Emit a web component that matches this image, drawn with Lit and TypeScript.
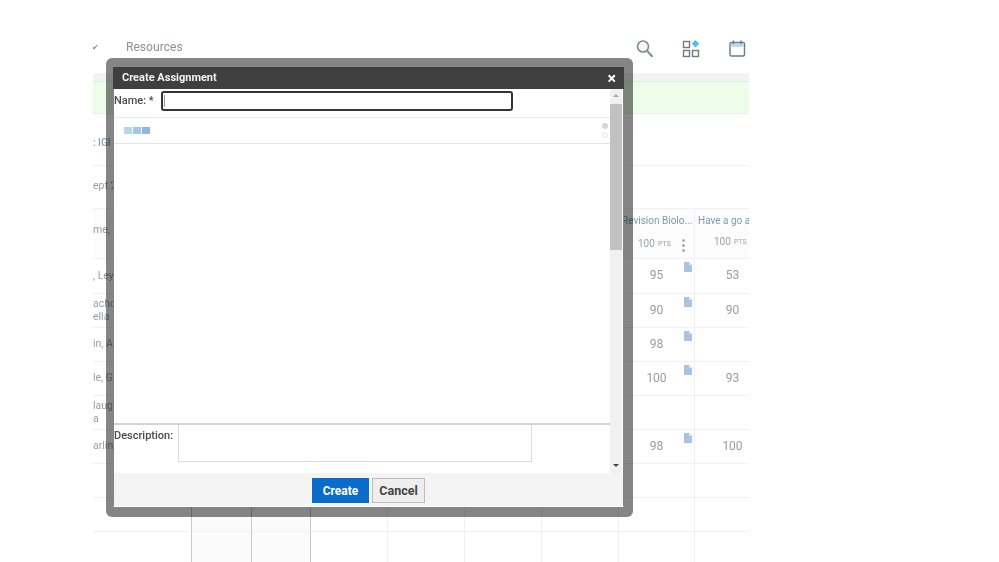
import { LitElement, html, css, svg } from "lit";
import { customElement } from "lit/decorators.js";

type Row = { name: string[]; a?: string; b?: string; doc: boolean; h: number };

const ROWS: Row[] = [
  { name: [", Leyla"], a: "95", b: "53", doc: true, h: 35 },
  { name: ["achcroft,", "ella"], a: "90", b: "90", doc: true, h: 34 },
  { name: ["in, Amy"], a: "98", doc: true, h: 34 },
  { name: ["le, Grace"], a: "100", b: "93", doc: true, h: 34 },
  { name: ["laughlin,", "a"], doc: false, h: 34 },
  { name: ["arling"], a: "98", b: "100", doc: true, h: 34 },
  { name: [""], doc: false, h: 34 },
  { name: [""], doc: false, h: 34 },
  { name: [""], doc: false, h: 31 },
];

const docIcon = svg`<svg class="doc" width="8" height="10" viewBox="0 0 8 10"><path d="M0 0h5l3 3v7H0z" fill="#a9c3e6"/><path d="M5 0l3 3H5z" fill="#dbe6f5"/></svg>`;

@customElement("app-root")
export class AppRoot extends LitElement {
  static styles = css`
    :host {
      display: block;
      position: relative;
      width: 999px;
      height: 562px;
      overflow: hidden;
      background: #fff;
      font-family: Roboto, "Liberation Sans", sans-serif;
      color: #8b8f94;
    }
    .soft { filter: blur(0.5px); width: 999px; height: 562px; }
    .page { width: 656px; margin-left: 93px; overflow: hidden; height: 562px; }
    .topbar { height: 73px; display: flex; align-items: center; padding-top: 21px; box-sizing: border-box; }
    .check { width: 33px; font-size: 8px; color: #888; text-indent: -1px; }
    .topbar-main { flex: 1; display: flex; align-items: center; }
    .res { font-size: 12.1px; color: #8d9196; flex: 1; }
    .icons { display: flex; gap: 26px; margin: 4px 2px 0 0; }
    .icons svg { display: block; }
    .strip { height: 8px; background: #f3f3f3; }
    .green { height: 31px; background: #eefdea; border-top: 1px solid #dcefd6; border-bottom: 1px solid #e6f3e1; }
    .info { height: 52px; border-bottom: 1px solid #f2f2f2; box-sizing: border-box; padding-top: 23px; font-size: 10px; color: #8aa0b8; font-weight: 500; line-height: 12px; }
    .info2 { height: 42px; box-sizing: border-box; padding-top: 14px; font-size: 10.5px; color: #9a9da1; line-height: 12px; }
    .table { display: grid; grid-template-columns: 98px 60px 59px 77px 77px 77px 77px 76px 76px; }
    .c { border-left: 1px solid #f0f0f0; border-bottom: 1px solid #f1f1f1; box-sizing: border-box; position: relative; display: flex; align-items: center; justify-content: center; font-size: 12px; color: #999ca0; padding-bottom: 2px; }
    .c.first { border-left: none; justify-content: flex-start; font-size: 10.5px; line-height: 13px; color: #9a9da1; padding-bottom: 2px; }
    .c.strong { border-left-color: #c8c8c8; background: #fbfbfb; }
    .c.strong3 { border-left-color: #c8c8c8; }
    .hd { height: 51px; background: #fcfcfc; border-top: 1px solid #f1f1f1; border-left-color: #f0f0f0; flex-direction: column; align-items: flex-start; justify-content: flex-start; padding-bottom: 0; }
    .c.first.hd { justify-content: flex-start; align-items: flex-start; padding-top: 14px; }
    .title { font-size: 10px; color: #8398b0; white-space: nowrap; padding: 5px 0 0 3px; line-height: 13px; }
    .pts { display: flex; align-items: center; font-size: 10px; color: #9ea1a5; padding: 9px 0 0 19px; line-height: 12px; white-space: nowrap; }
    .pts small { font-size: 7px; margin-left: 3px; }
    .kebab { display: flex; flex-direction: column; gap: 2px; margin-left: 11px; margin-top: 3px; }
    .kebab i { width: 3px; height: 3px; border-radius: 50%; background: #a8abae; display: block; }
    .doc { position: absolute; left: 65px; top: 3px; }

    .dialog {
      position: absolute;
      left: 106px;
      top: 58px;
      width: 527px;
      height: 459px;
      box-sizing: border-box;
      border: solid rgba(0, 0, 0, 0.48);
      border-width: 9px 9px 10px 7px;
      border-radius: 6px;
      display: flex;
      flex-direction: column;
      background: #fff;
      background-clip: padding-box;
      color: #444;
      font-size: 11px;
    }
    .dlg-title { height: 22px; flex: none; box-sizing: border-box; background: #3f3f3f; color: #f2f2f2; font-weight: 700; font-size: 11px; display: flex; align-items: center; justify-content: space-between; padding: 0 8px 1px 9px; }
    .close { font-size: 16px; font-weight: 700; color: #fff; line-height: 1; margin-top: 3px; }
    .dlg-body { flex: 1; display: flex; min-height: 0; padding: 0 1px 0 0; border: solid #828282; border-width: 0 1px; }
    .main { flex: 1; display: flex; flex-direction: column; min-width: 0; }
    .name-row { height: 29px; flex: none; box-sizing: border-box; border-bottom: 1px solid #e9e9e9; display: flex; align-items: flex-start; padding-top: 2px; gap: 7px; }
    .lbl { font-weight: 500; color: #4a4a4a; line-height: 16px; padding-top: 2px; white-space: nowrap; }
    .name-wrap { position: relative; display: block; }
    .name-wrap input { display: block; width: 352px; height: 20px; box-sizing: border-box; border: 2px solid #333; border-radius: 3px; outline: none; background: #fff; margin: 0; padding: 0; }
    .caret { position: absolute; left: 3px; top: 4px; width: 1px; height: 12px; background: #999; }
    .editor { height: 26px; flex: none; box-sizing: border-box; border-bottom: 1px solid #e3e3e3; display: flex; align-items: center; justify-content: space-between; padding: 0 2px 0 10px; }
    .sq { display: flex; gap: 1px; }
    .sq i { width: 8px; height: 7px; display: block; }
    .sq i:nth-child(1) { background: #b9d5ee; }
    .sq i:nth-child(2) { background: #a4c6e8; }
    .sq i:nth-child(3) { background: #8cb9e4; }
    .dots { display: flex; flex-direction: column; gap: 3px; }
    .dots i { width: 6px; height: 6px; border-radius: 50%; display: block; box-sizing: border-box; background: #d4d4d4; }
    .dots i + i { background: #fff; border: 1px solid #e6e6e6; }
    .space { flex: 1; border-bottom: 2px solid #d3d3d3; }
    .desc { height: 48px; flex: none; display: flex; gap: 5px; align-items: flex-start; }
    .desc .lbl { padding-top: 3px; }
    .desc textarea { display: block; width: 354px; height: 37px; box-sizing: border-box; border: 1px solid #dcdcdc; border-top: none; margin: 0; padding: 0; resize: none; outline: none; background: #fff; }
    .sb { width: 12px; flex: none; background: #f1f1f1; display: flex; flex-direction: column; align-items: center; }
    .sb .up { margin-top: 5px; flex: none; width: 0; height: 0; border: 3px solid transparent; border-top: none; border-bottom: 3px solid #aaa; }
    .sb .thumb { margin-top: 7px; flex: none; width: 100%; height: 146px; background: #c1c1c1; }
    .sb .fill { flex: 1; }
    .sb .down { margin-bottom: 6px; flex: none; width: 0; height: 0; border: 3px solid transparent; border-bottom: none; border-top: 3px solid #444; }
    .footer { height: 34px; flex: none; background: #f4f4f4; box-sizing: border-box; display: flex; justify-content: center; gap: 3px; padding: 5px 0 0 0; border: solid #828282; border-width: 0 1px; border-bottom: 1px solid #fff; }
    button { font: inherit; font-weight: 700; height: 25px; margin: 0; box-sizing: border-box; padding: 0; font-size: 12px; }
    .create { width: 57px; background: #0a6bca; color: #fff; border: none; }
    .cancel { width: 53px; background: #eeeeee; color: #444; border: 1px solid #bdbdbd; font-size: 12.5px; }
  `;

  private topIcons() {
    return html`<div class="icons">
      <svg width="20" height="20" viewBox="0 0 20 20" fill="none">
        <circle cx="8" cy="7.5" r="5.5" stroke="#7f8a90" stroke-width="1.6" fill="#f4f8fa"/>
        <path d="M12.2 12l4.6 5" stroke="#8d979c" stroke-width="2.4" stroke-linecap="round"/>
      </svg>
      <svg width="20" height="20" viewBox="0 0 20 20" fill="none">
        <rect x="2.5" y="2.5" width="6" height="6" stroke="#6f7a80" stroke-width="1.4"/>
        <rect x="2.5" y="11.5" width="6" height="6" stroke="#6f7a80" stroke-width="1.4"/>
        <rect x="11.5" y="11.5" width="6" height="6" stroke="#6f7a80" stroke-width="1.4"/>
        <path d="M14.5 1l3.7 3.7-3.7 3.7-3.7-3.7z" fill="#4fc0e4"/>
      </svg>
      <svg width="20" height="20" viewBox="0 0 20 20" fill="none">
        <rect x="3" y="3.5" width="14.5" height="13.5" rx="1.5" stroke="#6f7a80" stroke-width="1.4"/>
        <rect x="3.8" y="4.3" width="12.9" height="3.4" fill="#a9dcee"/>
        <path d="M6.5 1.5v3.5M14 1.5v3.5" stroke="#6f7a80" stroke-width="1.4"/>
      </svg>
    </div>`;
  }

  private cols(r: Row) {
    const plain = (i: number) =>
      html`<div class="c ${i < 2 ? "strong" : i === 2 ? "strong3" : ""}" style="height:${r.h}px"></div>`;
    return html`
      <div class="c first" style="height:${r.h}px"><div>${r.name.map((n) => html`<div>${n}</div>`)}</div></div>
      ${[0, 1, 2, 3, 4, 5].map(plain)}
      <div class="c" style="height:${r.h}px"><span>${r.a ?? ""}</span>${r.doc ? docIcon : ""}</div>
      <div class="c" style="height:${r.h}px"><span>${r.b ?? ""}</span></div>
    `;
  }

  render() {
    return html`<div class="soft">
      <div class="page">
        <div class="topbar">
          <div class="check">✔</div>
          <div class="topbar-main"><div class="res">Resources</div>${this.topIcons()}</div>
        </div>
        <div class="strip"></div>
        <div class="green"></div>
        <div class="info">: IGI</div>
        <div class="info2">ept 2</div>
        <div class="table">
          <div class="c first hd">me, A</div>
          ${[0, 1, 2, 3, 4, 5].map(() => html`<div class="c hd"></div>`)}
          <div class="c hd">
            <div class="title">Revision Biolo...</div>
            <div class="pts">100<small>PTS</small><span class="kebab"><i></i><i></i><i></i></span></div>
          </div>
          <div class="c hd">
            <div class="title">Have a go a</div>
            <div class="pts">100<small>PTS</small></div>
          </div>
          ${ROWS.map((r) => this.cols(r))}
        </div>
      </div>
      <div class="dialog">
        <div class="dlg-title"><span>Create Assignment</span><span class="close">×</span></div>
        <div class="dlg-body">
          <div class="main">
            <div class="name-row">
              <span class="lbl">Name: *</span>
              <span class="name-wrap"><input type="text" /><span class="caret"></span></span>
            </div>
            <div class="editor">
              <div class="sq"><i></i><i></i><i></i></div>
              <div class="dots"><i></i><i></i></div>
            </div>
            <div class="space"></div>
            <div class="desc">
              <span class="lbl">Description:</span>
              <textarea></textarea>
            </div>
          </div>
          <div class="sb">
            <div class="up"></div>
            <div class="thumb"></div>
            <div class="fill"></div>
            <div class="down"></div>
          </div>
        </div>
        <div class="footer">
          <button class="create">Create</button>
          <button class="cancel">Cancel</button>
        </div>
      </div>
    </div>`;
  }
}
